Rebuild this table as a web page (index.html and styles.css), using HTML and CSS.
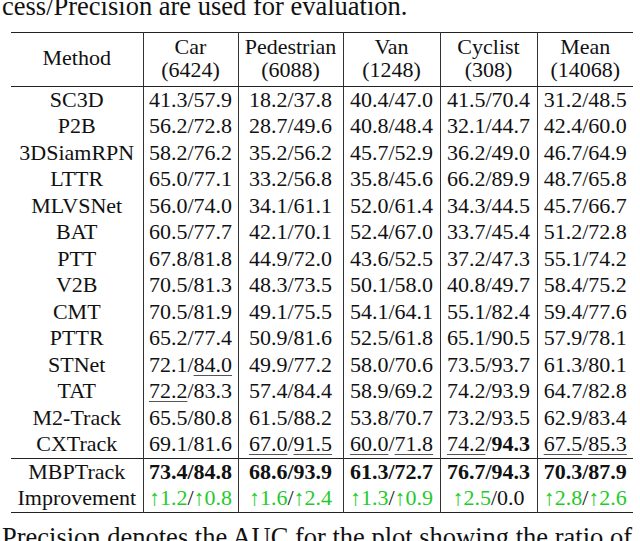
FILE: index.html
```html
<!DOCTYPE html>
<html>
<head>
<meta charset="utf-8">
<link rel="stylesheet" href="styles.css">
</head>
<body>
<p class="caption-top">cess/Precision are used for evaluation.</p>
<table class="results">
  <colgroup>
    <col class="c-method"><col class="c-car"><col class="c-ped"><col class="c-van"><col class="c-cyc"><col class="c-mean">
  </colgroup>
  <thead>
    <tr>
      <th>Method</th>
      <th>Car<br>(6424)</th>
      <th>Pedestrian<br>(6088)</th>
      <th>Van<br>(1248)</th>
      <th>Cyclist<br>(308)</th>
      <th>Mean<br>(14068)</th>
    </tr>
  </thead>
  <tbody>
    <tr><td>SC3D</td><td>41.3/57.9</td><td>18.2/37.8</td><td>40.4/47.0</td><td>41.5/70.4</td><td>31.2/48.5</td></tr>
    <tr><td>P2B</td><td>56.2/72.8</td><td>28.7/49.6</td><td>40.8/48.4</td><td>32.1/44.7</td><td>42.4/60.0</td></tr>
    <tr><td>3DSiamRPN</td><td>58.2/76.2</td><td>35.2/56.2</td><td>45.7/52.9</td><td>36.2/49.0</td><td>46.7/64.9</td></tr>
    <tr><td>LTTR</td><td>65.0/77.1</td><td>33.2/56.8</td><td>35.8/45.6</td><td>66.2/89.9</td><td>48.7/65.8</td></tr>
    <tr><td>MLVSNet</td><td>56.0/74.0</td><td>34.1/61.1</td><td>52.0/61.4</td><td>34.3/44.5</td><td>45.7/66.7</td></tr>
    <tr><td>BAT</td><td>60.5/77.7</td><td>42.1/70.1</td><td>52.4/67.0</td><td>33.7/45.4</td><td>51.2/72.8</td></tr>
    <tr><td>PTT</td><td>67.8/81.8</td><td>44.9/72.0</td><td>43.6/52.5</td><td>37.2/47.3</td><td>55.1/74.2</td></tr>
    <tr><td>V2B</td><td>70.5/81.3</td><td>48.3/73.5</td><td>50.1/58.0</td><td>40.8/49.7</td><td>58.4/75.2</td></tr>
    <tr><td>CMT</td><td>70.5/81.9</td><td>49.1/75.5</td><td>54.1/64.1</td><td>55.1/82.4</td><td>59.4/77.6</td></tr>
    <tr><td>PTTR</td><td>65.2/77.4</td><td>50.9/81.6</td><td>52.5/61.8</td><td>65.1/90.5</td><td>57.9/78.1</td></tr>
    <tr><td>STNet</td><td>72.1/<span class="u">84.0</span></td><td>49.9/77.2</td><td>58.0/70.6</td><td>73.5/93.7</td><td>61.3/80.1</td></tr>
    <tr><td>TAT</td><td><span class="u">72.2</span>/83.3</td><td>57.4/84.4</td><td>58.9/69.2</td><td>74.2/93.9</td><td>64.7/82.8</td></tr>
    <tr><td>M2-Track</td><td>65.5/80.8</td><td>61.5/88.2</td><td>53.8/70.7</td><td>73.2/93.5</td><td>62.9/83.4</td></tr>
    <tr><td>CXTrack</td><td>69.1/81.6</td><td><span class="u">67.0</span>/<span class="u">91.5</span></td><td><span class="u">60.0</span>/<span class="u">71.8</span></td><td><span class="u">74.2</span>/<b>94.3</b></td><td><span class="u">67.5</span>/<span class="u">85.3</span></td></tr>
    <tr class="ours"><td>MBPTrack</td><td><b>73.4/84.8</b></td><td><b>68.6/93.9</b></td><td><b>61.3/72.7</b></td><td><b>76.7/94.3</b></td><td><b>70.3/87.9</b></td></tr>
    <tr><td>Improvement</td><td><span class="g">↑1.2</span>/<span class="g">↑0.8</span></td><td><span class="g">↑1.6</span>/<span class="g">↑2.4</span></td><td><span class="g">↑1.3</span>/<span class="g">↑0.9</span></td><td><span class="g">↑2.5</span>/0.0</td><td><span class="g">↑2.8</span>/<span class="g">↑2.6</span></td></tr>
  </tbody>
</table>
<p class="caption-bottom">Precision denotes the AUC for the plot showing the ratio of</p>
</body>
</html>
```

FILE: styles.css
```css
html, body {
  margin: 0;
  padding: 0;
  background: #fff;
  overflow: hidden;
}
body {
  font-family: "Liberation Serif", serif;
  color: #111;
  width: 640px;
  height: 541px;
}
.caption-top {
  font-family: "Liberation Serif", serif;
  margin: -7px 0 0 2px;
  font-size: 26.5px;
  line-height: 26.5px;
  white-space: nowrap;
}
.results {
  font-family: "Liberation Serif", serif;
  border-collapse: collapse;
  table-layout: fixed;
  width: 622px;
  margin: 12.5px 0 0 11px;
  font-size: 22px;
  border-top: 1px solid #222;
  border-bottom: 1px solid #222;
}
.c-method { width: 132px; }
.c-car { width: 95px; }
.c-ped { width: 105px; }
.c-van { width: 97px; }
.c-cyc { width: 97px; }
.c-mean { width: 96px; }
.results th,
.results td {
  font-family: "Liberation Serif", serif;
  padding: 0;
  text-align: center;
  white-space: nowrap;
  font-weight: normal;
}
.results td {
  line-height: 25.5px;
  padding-bottom: 1px;
}
.results th {
  line-height: 23px;
  padding: 1.5px 0 5px;
  border-bottom: 1px solid #222;
}
.results th + th,
.results td + td {
  border-left: 1px solid #333;
}
.results tr.ours td {
  border-top: 1px solid #222;
}
.results b {
  font-weight: bold;
}
.u {
  text-decoration: underline;
  text-decoration-color: #555;
  text-decoration-thickness: 1px;
  text-underline-offset: 3px;
}
.g {
  color: #1fcb2a;
}
.caption-bottom {
  font-family: "Liberation Serif", serif;
  margin: 11px 0 0 2px;
  font-size: 26.5px;
  line-height: 26.5px;
  white-space: nowrap;
}
```
